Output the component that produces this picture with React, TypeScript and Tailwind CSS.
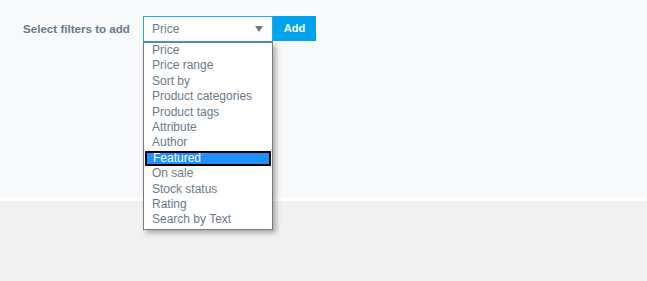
const options = [
  "Price",
  "Price range",
  "Sort by",
  "Product categories",
  "Product tags",
  "Attribute",
  "Author",
  "Featured",
  "On sale",
  "Stock status",
  "Rating",
  "Search by Text",
];

export default function App() {
  const selected = "Featured";
  return (
    <div className="h-[281px] w-[647px] overflow-hidden bg-[#f1f1f1] font-['Liberation_Sans',Arial,sans-serif]">
      <div className="h-[201px] border-b-4 border-white bg-[#f8f9fb] pl-[23px] pt-4">
        <div className="flex items-start">
          <span className="mt-[6px] w-[120px] text-[11.6px] font-bold leading-[14px] text-[#6b7987]">
            Select filters to add
          </span>
          <div className="relative">
            <div className="flex h-[26px] w-[130px] items-center border border-[#22a7e6] bg-white pl-[8px] pr-[8px]">
              <span className="flex-1 text-[12px] text-[#6b7987]">Price</span>
              <svg width="8" height="6" viewBox="0 0 8 6" className="mr-[1px]">
                <path d="M0 0H8L4 6Z" fill="#6b7987" />
              </svg>
            </div>
            <ul className="absolute left-0 top-[26px] z-10 w-[130px] border border-[#7a7a7a] bg-white pb-[1px] shadow-[3px_3px_5px_rgba(0,0,0,0.3)]">
              {options.map((o) => (
                <li
                  key={o}
                  className={
                    o === selected
                      ? "mx-[1px] h-[15.4px] border-2 border-black bg-[#1e90ff] pl-[6px] text-[12px] leading-[11px] text-white"
                      : "h-[15.4px] pl-[8px] text-[12px] leading-[15px] text-[#6b7987]"
                  }
                >
                  {o}
                </li>
              ))}
            </ul>
          </div>
          <button className="h-[25px] w-[43px] bg-[#00a3ee] text-[11px] font-bold text-white">
            Add
          </button>
        </div>
      </div>
    </div>
  );
}
